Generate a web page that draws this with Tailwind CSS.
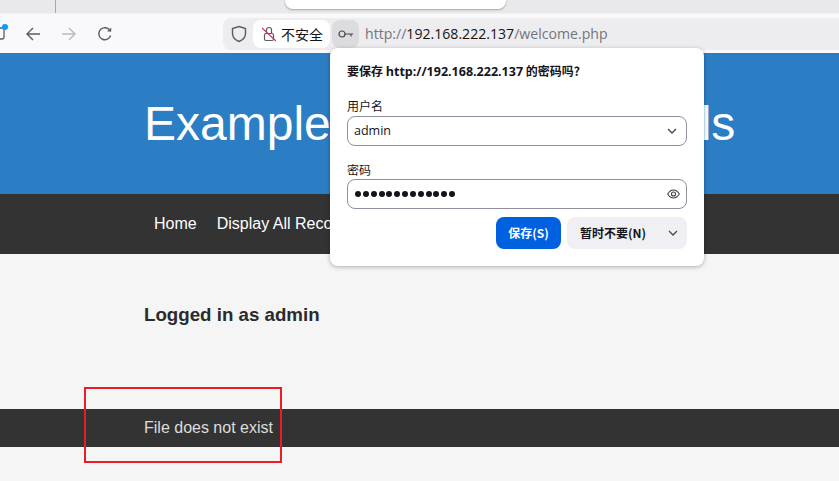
<!DOCTYPE html>
<html lang="zh">
<head>
<meta charset="UTF-8" />
<title>welcome</title>
<script src="https://cdn.jsdelivr.net/npm/@tailwindcss/browser@4"></script>
</head>
<body class="relative w-[839px] h-[481px] overflow-hidden bg-[#f5f5f5] font-['Liberation_Sans',sans-serif]">
    <!-- tab strip -->
    <div class="relative h-[13px] bg-[#e9e9eb]">
        <div class="absolute left-[55px] top-0 w-px h-[13px] bg-[#a8a8aa]"></div>
        <div class="absolute left-[285px] top-[-10px] w-[221px] h-[19px] bg-white rounded-b-[8px] shadow-[0_1px_2px_rgba(0,0,0,0.3)]"></div>
    </div>
    <!-- toolbar -->
    <div class="relative h-[40px] bg-[#f9f9fb] border-t border-[#f1f1f3] flex items-center">
        <svg class="absolute left-[-7px] top-[11px]" width="14" height="16" viewBox="0 0 14 16" fill="none" stroke="#5b5b66" stroke-width="1.3"><rect x="1" y="3" width="10" height="11" rx="2"/></svg>
        <div class="absolute left-[2px] top-[10px] w-[6px] h-[6px] rounded-full bg-[#0a9dff]"></div>
        <svg class="ml-[25px]" width="16" height="16" viewBox="0 0 16 16" fill="none" stroke="#5b5b66" stroke-width="1.4"><path d="M15 8H2M8 2L2 8l6 6"/></svg>
        <svg class="ml-[20px]" width="16" height="16" viewBox="0 0 16 16" fill="none" stroke="#b9b9bd" stroke-width="1.4"><path d="M1 8h13M8 2l6 6-6 6"/></svg>
        <svg class="ml-[20px]" width="16" height="16" viewBox="0 0 16 16" fill="none" stroke="#5b5b66" stroke-width="1.4"><path d="M13.6 9.5A6 6 0 1 1 11.5 3l2.5 2"/><path d="M14.2 1.5V5.6H10" fill="#5b5b66" stroke="none"/></svg>
        <!-- url bar -->
        <div class="ml-[110px] w-[616px] h-[32px] bg-[#ededef] rounded-l-[8px] flex items-center">
            <svg class="ml-[8px]" width="16" height="18" viewBox="0 0 16 18" fill="none" stroke="#5b5b66" stroke-width="1.4"><path d="M8 1.500l6.500 2v5c0 4-3 6.600-6.500 8-3.500-1.400-6.500-4-6.500-8v-5z"/></svg>
            <div class="ml-[6px] w-[77px] h-[28px] bg-white rounded-[8px] flex items-center">
                <svg class="ml-[9px]" width="14" height="16" viewBox="0 0 14 16" fill="none"><rect x="2.500" y="7.500" width="9" height="7" rx="1.500" stroke="#5b5b66" stroke-width="1.200"/><path d="M4.500 7.500V4a2.500 2.500 0 0 1 5 0v3.500" stroke="#5b5b66" stroke-width="1.200"/><path d="M0 2l14 13" stroke="#e22850" stroke-width="1.200"/></svg>
                <span class="ml-[5px] text-[14px] leading-none text-[#15141a] font-['Noto_Sans_CJK_SC',sans-serif]">不安全</span>
            </div>
            <div class="ml-[2px] w-[27px] h-[28px] bg-[#dcdcde] rounded-[8px] flex items-center justify-center">
                <svg width="16" height="10" viewBox="0 0 16 10" fill="none" stroke="#45454d" stroke-width="1.200"><circle cx="4" cy="5" r="3"/><path d="M7 5h8M13 5v2.500"/></svg>
            </div>
            <span class="ml-[6px] text-[14.100px] text-[#74747c] font-['Open_Sans',sans-serif]">http://<span class="text-[#15141a]">192.168.222.137</span>/welcome.php</span>
        </div>
    </div>

    <!-- page -->
    <header class="h-[141px] bg-[#2b7dc4] flex items-center pl-[144px]">
        <h1 class="text-[48px] leading-none text-white whitespace-nowrap">Example Websites Tutorials</h1>
    </header>
    <nav class="h-[60px] bg-[#333333] flex items-center pl-[154px] gap-[20px] text-[16px] text-white">
        <a>Home</a>
        <a>Display All Records</a>
    </nav>
    <main class="h-[155px] pl-[144px] pt-[49px]">
        <h2 class="text-[18.720px] leading-[24px] font-bold text-[#2b2b2b]">Logged in as admin</h2>
    </main>
    <footer class="h-[38px] bg-[#333333] pl-[144px] flex items-center text-[16px] text-[#dddddd]">File does not exist</footer>

    <!-- annotation -->
    <div class="absolute left-[84px] top-[387px] w-[198px] h-[76px] border-2 border-[#ed1c24]"></div>

    <!-- password popup -->
    <div class="absolute left-[330px] top-[48px] w-[374px] h-[218px] bg-white rounded-[8px] shadow-[0_1px_4px_rgba(0,0,0,0.3)] px-[17px] text-[#15141a] font-['Noto_Sans_CJK_SC',sans-serif]">
        <p class="mt-[15px] text-[12px] leading-[16px] font-bold whitespace-nowrap">要保存 <span class="font-['Open_Sans',sans-serif] text-[12.500px]">http://192.168.222.137</span> 的密码吗?</p>
        <label class="block mt-[18px] text-[12px] leading-[16px]">用户名</label>
        <div class="mt-[2px] h-[30px] border border-[#8f8f9d] rounded-[8px] flex items-center justify-between pl-[6px] pr-[9px] text-[12.500px]">
            <span class="font-['Open_Sans',sans-serif]">admin</span>
            <svg width="10" height="6" viewBox="0 0 10 6" fill="none" stroke="#45454d" stroke-width="1.300"><path d="M1 1l4 4 4-4"/></svg>
        </div>
        <label class="block mt-[16px] text-[12px] leading-[16px]">密码</label>
        <div class="mt-[1px] h-[30px] border border-[#8f8f9d] rounded-[8px] flex items-center justify-between pl-[7px] pr-[6px]">
            <div class="flex gap-[1.850px]">
                <i class="w-[6px] h-[6px] rounded-full bg-[#15141a]"></i><i class="w-[6px] h-[6px] rounded-full bg-[#15141a]"></i><i class="w-[6px] h-[6px] rounded-full bg-[#15141a]"></i><i class="w-[6px] h-[6px] rounded-full bg-[#15141a]"></i><i class="w-[6px] h-[6px] rounded-full bg-[#15141a]"></i><i class="w-[6px] h-[6px] rounded-full bg-[#15141a]"></i><i class="w-[6px] h-[6px] rounded-full bg-[#15141a]"></i><i class="w-[6px] h-[6px] rounded-full bg-[#15141a]"></i><i class="w-[6px] h-[6px] rounded-full bg-[#15141a]"></i><i class="w-[6px] h-[6px] rounded-full bg-[#15141a]"></i><i class="w-[6px] h-[6px] rounded-full bg-[#15141a]"></i><i class="w-[6px] h-[6px] rounded-full bg-[#15141a]"></i><i class="w-[6px] h-[6px] rounded-full bg-[#15141a]"></i>
            </div>
            <svg width="13" height="10" viewBox="0 0 13 10" fill="none" stroke="#3a3a42" stroke-width="1.100"><path d="M.7 5C2.500 2 4.500 1 6.500 1s4 1 5.800 4C10.500 8 8.500 9 6.500 9S2.500 8 .7 5z"/><circle cx="6.500" cy="5" r="2"/></svg>
        </div>
        <div class="mt-[8px] flex justify-end gap-[6px] text-[12px] font-bold">
            <button class="w-[65px] h-[32px] rounded-[8px] bg-[#0061e0] text-white">保存(S)</button>
            <button class="w-[120px] h-[32px] rounded-[8px] bg-[#f0f0f4] flex items-center justify-between pl-[13px] pr-[9px]">
                <span>暂时不要(N)</span>
                <svg width="10" height="6" viewBox="0 0 10 6" fill="none" stroke="#45454d" stroke-width="1.300"><path d="M1 1l4 4 4-4"/></svg>
            </button>
        </div>
    </div>
</body>
</html>
